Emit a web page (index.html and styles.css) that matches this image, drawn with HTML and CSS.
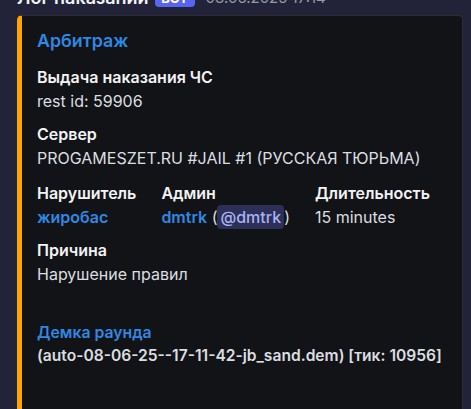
FILE: index.html
```html
<!DOCTYPE html>
<html lang="ru">
<head>
<meta charset="utf-8">
<title>Лог наказаний</title>
<link rel="stylesheet" href="styles.css">
</head>
<body>
<div class="msg">
  <div class="header">
    <span class="author">Лог наказаний</span>
    <span class="tag">BOT</span>
    <span class="time">08.06.2025 17:14</span>
  </div>
  <div class="embed">
    <div class="title">Арбитраж</div>
    <div class="fields">
      <div class="field">
        <div class="fname">Выдача наказания ЧС</div>
        <div class="fvalue">rest id: 59906</div>
      </div>
      <div class="field">
        <div class="fname">Сервер</div>
        <div class="fvalue">PROGAMESZET.RU #JAIL #1 (РУССКАЯ ТЮРЬМА)</div>
      </div>
      <div class="row">
        <div class="field">
          <div class="fname">Нарушитель</div>
          <div class="fvalue"><span class="link">жиробас</span></div>
        </div>
        <div class="field">
          <div class="fname">Админ</div>
          <div class="fvalue"><span class="link">dmtrk</span> (<span class="mention">@dmtrk</span>)</div>
        </div>
        <div class="field">
          <div class="fname">Длительность</div>
          <div class="fvalue">15 minutes</div>
        </div>
      </div>
      <div class="field">
        <div class="fname">Причина</div>
        <div class="fvalue">Нарушение правил</div>
      </div>
      <div class="field">
        <div class="fname blank"></div>
        <div class="fvalue">
          <div class="demo-link">Демка раунда</div>
          <div class="demo-file">(auto-08-06-25--17-11-42-jb_sand.dem) [тик: 10956]</div>
        </div>
      </div>
    </div>
  </div>
</div>
</body>
</html>
```

FILE: styles.css
```css
html, body {
  margin: 0;
  padding: 0;
  overflow: hidden;
}
body {
  background: #222339;
  font-family: Inter, "Noto Sans", sans-serif;
  color: #dbdee1;
}
.msg {
  padding-left: 17px;
}
.header {
  display: flex;
  align-items: center;
  height: 20px;
  margin-top: -12px;
  white-space: nowrap;
}
.author {
  font-size: 18px;
  font-weight: 600;
  color: #f2f3f5;
  line-height: 20px;
}
.tag {
  margin-left: 6px;
  height: 18px;
  width: 40px;
  border-radius: 4px;
  background: #5865f2;
  color: #fff;
  font-size: 13px;
  font-weight: 700;
  display: flex;
  align-items: center;
  justify-content: center;
}
.time {
  margin-left: 11px;
  font-size: 15px;
  color: #949ba4;
  line-height: 20px;
}
.embed {
  margin-top: 7px;
  box-sizing: border-box;
  width: 446px;
  background: #121316;
  border: 1px solid #2c2d36;
  border-left: 5px solid #ffa500;
  border-radius: 5px;
  padding: 12px 12px 60px 15px;
}
.title {
  font-size: 17.8px;
  line-height: 26px;
  font-weight: 600;
  color: #2f88e3;
}
.fields {
  margin-top: 13px;
  display: flex;
  flex-direction: column;
  gap: 13px;
}
.row {
  display: flex;
  gap: 25px;
  margin-top: 2px;
}
.fname {
  font-size: 16px;
  line-height: 20px;
  font-weight: 600;
  color: #f2f3f5;
  margin-bottom: 4px;
}
.blank {
  height: 20px;
}
.fvalue {
  font-size: 16px;
  line-height: 20px;
  color: #dbdee1;
  white-space: nowrap;
}
.link {
  color: #2f88e3;
  font-weight: 600;
}
.mention {
  padding: 2px 3px;
  border-radius: 4px;
  background: #2c2f56;
  color: #a9b3f5;
  font-weight: 500;
}
.demo-link {
  font-size: 15.8px;
  line-height: 23px;
  font-weight: 600;
  color: #2f88e3;
}
.demo-file {
  margin-top: 2px;
  font-size: 15.6px;
  font-weight: 600;
  color: #dbdee1;
}
```
